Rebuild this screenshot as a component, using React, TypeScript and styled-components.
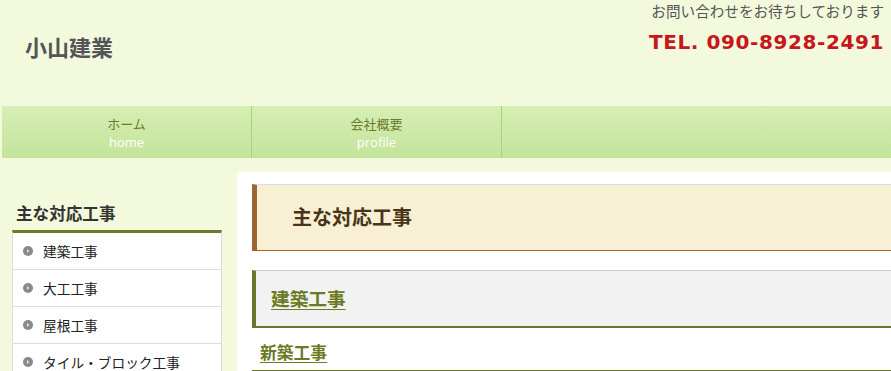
import React from "react";
import styled, { createGlobalStyle } from "styled-components";

const Global = createGlobalStyle`
  html, body { margin: 0; padding: 0; }
  body {
    background: #f2f9dd;
    font-family: "Noto Sans CJK JP", "Open Sans", sans-serif;
    overflow: hidden;
    width: 891px;
  }
`;

const Page = styled.div`
  width: 891px;
  overflow: hidden;
`;

const Header = styled.header`
  height: 106px;
  display: flex;
  justify-content: space-between;
  align-items: flex-start;
  padding: 0 7px 0 25px;
  box-sizing: border-box;
`;

const Logo = styled.h1`
  margin: 31px 0 0;
  font-size: 22px;
  font-weight: 700;
  color: #555;
  line-height: 30px;
`;

const Contact = styled.div`
  display: flex;
  flex-direction: column;
  align-items: flex-end;
`;

const Lead = styled.p`
  margin: 0;
  font-size: 14.6px;
  line-height: 22px;
  color: #555;
`;

const Tel = styled.p`
  margin: 5px 0 0;
  font-size: 20px;
  font-weight: 700;
  line-height: 30px;
  color: #c8161d;
  letter-spacing: 0.6px;
  font-family: "DejaVu Sans", "Noto Sans CJK JP", sans-serif;
`;

const Nav = styled.nav`
  margin-left: 2px;
  width: 1000px;
  height: 52px;
  display: flex;
  background: linear-gradient(#d6eeb4, #c3e49b);
`;

const NavItem = styled.a`
  width: 250px;
  box-sizing: border-box;
  border-right: 1px solid #a8d37a;
  display: flex;
  flex-direction: column;
  align-items: center;
  justify-content: center;
  text-decoration: none;
  padding-top: 2px;
`;

const NavJa = styled.span`
  font-size: 13px;
  line-height: 18px;
  color: #6a7a2a;
`;

const NavEn = styled.span`
  font-size: 13px;
  line-height: 18px;
  color: #fff;
  font-family: "Open Sans", sans-serif;
`;

const Body = styled.div`
  display: flex;
  align-items: flex-start;
  margin-top: 14px;
  padding-left: 12px;
  gap: 15px;
`;

const Side = styled.aside`
  width: 210px;
  flex-shrink: 0;
  padding-top: 24px;
`;

const SideTitle = styled.h2`
  margin: 0 0 0 4px;
  font-size: 16.6px;
  font-weight: 700;
  color: #333;
  line-height: 34px;
`;

const SideList = styled.ul`
  margin: 0;
  padding: 0;
  list-style: none;
  border-top: 3px solid #6b7a2b;
  background: #fff;
  border-left: 1px solid #ddd;
  border-right: 1px solid #ddd;
`;

const SideItem = styled.li`
  display: flex;
  align-items: center;
  gap: 10px;
  height: 36px;
  padding-left: 10px;
  border-bottom: 1px solid #ddd;
  font-size: 13.7px;
  color: #222;
`;

const Bullet = () => (
  <svg width="10" height="10" viewBox="0 0 10 10">
    <circle cx="5" cy="5" r="5" fill="#8a8a8a" />
    <path d="M4 3 L6.2 5 L4 7 Z" fill="#e8e8e8" />
  </svg>
);

const Main = styled.main`
  flex: 1;
  min-width: 700px;
  background: #fff;
  padding: 12px 0 0 15px;
  min-height: 200px;
`;

const PageTitle = styled.h2`
  margin: 0;
  height: 67px;
  box-sizing: border-box;
  background: #f7f0d5;
  border-top: 1px solid #ddd;
  border-bottom: 1px solid #a0652b;
  border-left: 5px solid #9a6731;
  display: flex;
  align-items: center;
  padding: 0 0 2px 35px;
  font-size: 20px;
  font-weight: 700;
  color: #4a3418;
`;

const SectionTitle = styled.h3`
  margin: 19px 0 0;
  height: 58px;
  box-sizing: border-box;
  background: #f2f2f2;
  border-top: 1px solid #ccc;
  border-bottom: 2px solid #66772a;
  border-left: 4px solid #66772a;
  display: flex;
  align-items: center;
  padding: 0 0 3px 15px;
  font-size: 18.7px;
  font-weight: 700;
`;

const Link = styled.a`
  color: #6b7a23;
  text-decoration: underline;
  text-underline-offset: 3px;
`;

const SubTitle = styled.h4`
  margin: 0;
  height: 44px;
  box-sizing: border-box;
  border-bottom: 2px solid #66772a;
  display: flex;
  align-items: center;
  padding: 5px 0 0 8px;
  font-size: 16.8px;
  font-weight: 700;
`;

const sideItems = ["建築工事", "大工工事", "屋根工事", "タイル・ブロック工事"];

export default function App() {
  return (
    <Page>
      <Global />
      <Header>
        <Logo>小山建業</Logo>
        <Contact>
          <Lead>お問い合わせをお待ちしております</Lead>
          <Tel>TEL. 090-8928-2491</Tel>
        </Contact>
      </Header>
      <Nav>
        <NavItem href="#">
          <NavJa>ホーム</NavJa>
          <NavEn>home</NavEn>
        </NavItem>
        <NavItem href="#">
          <NavJa>会社概要</NavJa>
          <NavEn>profile</NavEn>
        </NavItem>
      </Nav>
      <Body>
        <Side>
          <SideTitle>主な対応工事</SideTitle>
          <SideList>
            {sideItems.map((t) => (
              <SideItem key={t}>
                <Bullet />
                {t}
              </SideItem>
            ))}
          </SideList>
        </Side>
        <Main>
          <PageTitle>主な対応工事</PageTitle>
          <SectionTitle>
            <Link href="#">建築工事</Link>
          </SectionTitle>
          <SubTitle>
            <Link href="#">新築工事</Link>
          </SubTitle>
        </Main>
      </Body>
    </Page>
  );
}
